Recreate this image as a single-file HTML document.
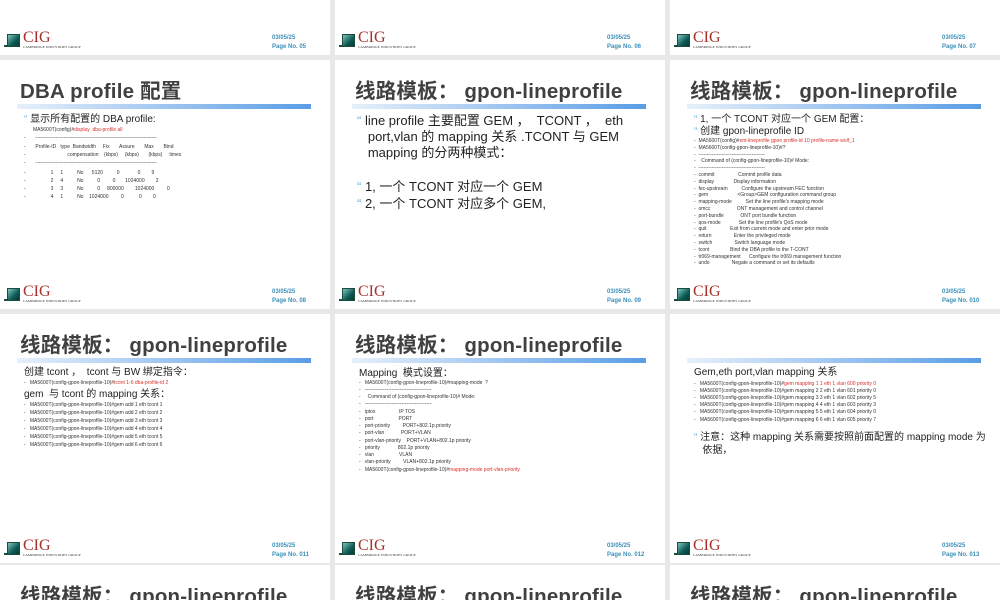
<!DOCTYPE html>
<html><head><meta charset="utf-8">
<style>
*{margin:0;padding:0;box-sizing:border-box}
html,body{width:1000px;height:600px;overflow:hidden}
body{background:#e8e8e8;position:relative;font-family:"Liberation Sans","Noto Sans CJK SC",sans-serif;color:#222}
.s{position:absolute;width:330px;height:249px;background:#fff;overflow:hidden}
.s *{position:absolute;white-space:nowrap}
.t{left:20px;top:19px;font-size:20.5px;line-height:26px;font-weight:bold;color:#404040;letter-spacing:0.2px}
.bar{left:17px;top:44px;width:294px;height:5px;background:linear-gradient(90deg,#e6f0fb,#5a9de6)}
.logo{left:7px;top:226px;width:90px;height:18px}
.sq{left:0;top:2px;width:13px;height:13px;background:linear-gradient(135deg,#7fc4c0,#0d5a55 60%,#063a36);border:1px solid #1b4d3a}
.sq2{left:-3px;top:13px;width:4px;height:2px;background:#1b4d3a}
.cig{left:16px;top:-4px;font-family:"Liberation Serif",serif;font-size:16px;line-height:19px;color:#a6312c}
.sub{left:16px;top:13px;font-family:"Liberation Serif",serif;font-size:3.5px;line-height:4px;color:#333;letter-spacing:0.1px}
.d{left:272px;top:229px;font-size:6px;line-height:7px;font-weight:bold;color:#3d8fb8}
.p{left:272px;top:238px;font-size:6px;line-height:7px;font-weight:bold;color:#3d8fb8}
.b{font-size:10px;line-height:12px;color:#222}
.c{font-size:5px;line-height:7px;color:#333}
.r{color:#d9302a;position:static!important}
.bl{color:#7ab6d8;position:static!important}
.last{height:35px}
</style></head><body>

<!-- row 0 -->
<div class="s" style="left:0;top:-194px">
<div class="logo"><div class="sq"></div><div class="sq2"></div><div class="cig">CIG</div><div class="sub">CAMBRIDGE INDUSTRIES GROUP</div></div>
<div class="d">03/05/25</div><div class="p">Page No. 05</div></div>
<div class="s" style="left:335px;top:-194px">
<div class="logo"><div class="sq"></div><div class="sq2"></div><div class="cig">CIG</div><div class="sub">CAMBRIDGE INDUSTRIES GROUP</div></div>
<div class="d">03/05/25</div><div class="p">Page No. 06</div></div>
<div class="s" style="left:670px;top:-194px">
<div class="logo"><div class="sq"></div><div class="sq2"></div><div class="cig">CIG</div><div class="sub">CAMBRIDGE INDUSTRIES GROUP</div></div>
<div class="d">03/05/25</div><div class="p">Page No. 07</div></div>

<!-- row 1 -->
<div class="s" style="left:0;top:60px">
<div class="t">DBA profile 配置</div><div class="bar"></div>
<div class="b" style="left:24px;top:54px"><span class="bl">“</span> 显示所有配置的 DBA profile:</div>
<div class="c" style="left:33px;top:67px">MA5600T(config)#<span class="r">display&nbsp; dba-profile all</span></div>
<div class="c" style="left:24px;top:75px">-&nbsp;&nbsp;&nbsp;&nbsp;&nbsp;&nbsp; -------------------------------------------------------------------------</div>
<div class="c" style="left:24px;top:84px">-&nbsp;&nbsp;&nbsp;&nbsp;&nbsp;&nbsp; Profile-ID&nbsp;&nbsp; type&nbsp; Bandwidth&nbsp;&nbsp;&nbsp;&nbsp; Fix&nbsp;&nbsp;&nbsp;&nbsp;&nbsp;&nbsp; Assure&nbsp;&nbsp;&nbsp;&nbsp;&nbsp;&nbsp; Max&nbsp;&nbsp;&nbsp;&nbsp;&nbsp;&nbsp; Bind</div>
<div class="c" style="left:24px;top:92px">-&nbsp;&nbsp;&nbsp;&nbsp;&nbsp;&nbsp;&nbsp;&nbsp;&nbsp;&nbsp;&nbsp;&nbsp;&nbsp;&nbsp;&nbsp;&nbsp;&nbsp;&nbsp;&nbsp;&nbsp;&nbsp;&nbsp;&nbsp;&nbsp;&nbsp;&nbsp;&nbsp;&nbsp;&nbsp; compensation&nbsp;&nbsp;&nbsp; (kbps)&nbsp;&nbsp;&nbsp;&nbsp; (kbps)&nbsp;&nbsp;&nbsp;&nbsp;&nbsp;&nbsp; (kbps)&nbsp;&nbsp;&nbsp;&nbsp; times</div>
<div class="c" style="left:24px;top:100px">-&nbsp;&nbsp;&nbsp;&nbsp;&nbsp;&nbsp; -------------------------------------------------------------------------</div>
<div class="c" style="left:24px;top:110px">-&nbsp;&nbsp;&nbsp;&nbsp;&nbsp;&nbsp;&nbsp;&nbsp;&nbsp;&nbsp;&nbsp;&nbsp;&nbsp;&nbsp;&nbsp;&nbsp;&nbsp; 1&nbsp;&nbsp;&nbsp;&nbsp; 1&nbsp;&nbsp;&nbsp;&nbsp;&nbsp;&nbsp;&nbsp;&nbsp;&nbsp; No&nbsp;&nbsp;&nbsp;&nbsp;&nbsp; 5120&nbsp;&nbsp;&nbsp;&nbsp;&nbsp;&nbsp;&nbsp;&nbsp;&nbsp; 0&nbsp;&nbsp;&nbsp;&nbsp;&nbsp;&nbsp;&nbsp;&nbsp;&nbsp;&nbsp;&nbsp;&nbsp; 0&nbsp;&nbsp;&nbsp;&nbsp;&nbsp;&nbsp;&nbsp; 9</div>
<div class="c" style="left:24px;top:118px">-&nbsp;&nbsp;&nbsp;&nbsp;&nbsp;&nbsp;&nbsp;&nbsp;&nbsp;&nbsp;&nbsp;&nbsp;&nbsp;&nbsp;&nbsp;&nbsp;&nbsp; 2&nbsp;&nbsp;&nbsp;&nbsp; 4&nbsp;&nbsp;&nbsp;&nbsp;&nbsp;&nbsp;&nbsp;&nbsp;&nbsp; No&nbsp;&nbsp;&nbsp;&nbsp;&nbsp;&nbsp;&nbsp;&nbsp;&nbsp; 0&nbsp;&nbsp;&nbsp;&nbsp;&nbsp;&nbsp;&nbsp;&nbsp; 0&nbsp;&nbsp;&nbsp;&nbsp;&nbsp;&nbsp; 1024000&nbsp;&nbsp;&nbsp;&nbsp;&nbsp;&nbsp;&nbsp; 2</div>
<div class="c" style="left:24px;top:126px">-&nbsp;&nbsp;&nbsp;&nbsp;&nbsp;&nbsp;&nbsp;&nbsp;&nbsp;&nbsp;&nbsp;&nbsp;&nbsp;&nbsp;&nbsp;&nbsp;&nbsp; 3&nbsp;&nbsp;&nbsp;&nbsp; 3&nbsp;&nbsp;&nbsp;&nbsp;&nbsp;&nbsp;&nbsp;&nbsp;&nbsp; No&nbsp;&nbsp;&nbsp;&nbsp;&nbsp;&nbsp;&nbsp;&nbsp;&nbsp; 0&nbsp;&nbsp;&nbsp;&nbsp; 800000&nbsp;&nbsp;&nbsp;&nbsp;&nbsp;&nbsp;&nbsp; 1024000&nbsp;&nbsp;&nbsp;&nbsp;&nbsp;&nbsp;&nbsp;&nbsp; 0</div>
<div class="c" style="left:24px;top:134px">-&nbsp;&nbsp;&nbsp;&nbsp;&nbsp;&nbsp;&nbsp;&nbsp;&nbsp;&nbsp;&nbsp;&nbsp;&nbsp;&nbsp;&nbsp;&nbsp;&nbsp; 4&nbsp;&nbsp;&nbsp;&nbsp; 1&nbsp;&nbsp;&nbsp;&nbsp;&nbsp;&nbsp;&nbsp;&nbsp;&nbsp; No&nbsp;&nbsp;&nbsp; 1024000&nbsp;&nbsp;&nbsp;&nbsp;&nbsp;&nbsp;&nbsp;&nbsp; 0&nbsp;&nbsp;&nbsp;&nbsp;&nbsp;&nbsp;&nbsp;&nbsp;&nbsp;&nbsp; 0&nbsp;&nbsp;&nbsp;&nbsp;&nbsp;&nbsp;&nbsp; 0</div>
<div class="logo"><div class="sq"></div><div class="sq2"></div><div class="cig">CIG</div><div class="sub">CAMBRIDGE INDUSTRIES GROUP</div></div>
<div class="d">03/05/25</div><div class="p">Page No. 08</div></div>

<div class="s" style="left:335px;top:60px">
<div class="t">线路模板： gpon-lineprofile</div><div class="bar"></div>
<div style="left:22px;top:53px;font-size:13px;line-height:16px;color:#222"><span class="bl">“</span> line profile 主要配置 GEM ，&nbsp; TCONT ，&nbsp; eth<br>&nbsp;&nbsp; port,vlan 的 mapping 关系 .TCONT 与 GEM<br>&nbsp;&nbsp; mapping 的分两种模式：</div>
<div style="left:22px;top:118px;font-size:13px;line-height:17px;color:#222"><span class="bl">“</span> 1, 一个 TCONT 对应一个 GEM<br><span class="bl">“</span> 2, 一个 TCONT 对应多个 GEM,</div>
<div class="logo"><div class="sq"></div><div class="sq2"></div><div class="cig">CIG</div><div class="sub">CAMBRIDGE INDUSTRIES GROUP</div></div>
<div class="d">03/05/25</div><div class="p">Page No. 09</div></div>

<div class="s" style="left:670px;top:60px">
<div class="t">线路模板： gpon-lineprofile</div><div class="bar"></div>
<div class="b" style="left:24px;top:54px"><span class="bl">“</span> 1, 一个 TCONT 对应一个 GEM 配置：</div>
<div class="b" style="left:24px;top:66px"><span class="bl">“</span> 创建 gpon-lineprofile ID</div>
<div class="c" style="left:24px;top:78px;line-height:6.8px">-&nbsp; MA5600T(config)#<span class="r">ont-lineprofile gpon profile-id 10 profile-name wolf_1</span><br>-&nbsp; MA5600T(config-gpon-lineprofile-10)#?<br>-&nbsp; ----------------------------------------<br>-&nbsp;&nbsp;&nbsp; Command of (config-gpon-lineprofile-10)# Mode:<br>-&nbsp; ----------------------------------------<br>-&nbsp; commit&nbsp;&nbsp;&nbsp;&nbsp;&nbsp;&nbsp;&nbsp;&nbsp;&nbsp;&nbsp;&nbsp;&nbsp;&nbsp;&nbsp;&nbsp;&nbsp; Commit profile data<br>-&nbsp; display&nbsp;&nbsp;&nbsp;&nbsp;&nbsp;&nbsp;&nbsp;&nbsp;&nbsp;&nbsp;&nbsp;&nbsp;&nbsp; Display information<br>-&nbsp; fec-upstream&nbsp;&nbsp;&nbsp;&nbsp;&nbsp;&nbsp;&nbsp;&nbsp;&nbsp; Configure the upstream FEC function<br>-&nbsp; gem&nbsp;&nbsp;&nbsp;&nbsp;&nbsp;&nbsp;&nbsp;&nbsp;&nbsp;&nbsp;&nbsp;&nbsp;&nbsp;&nbsp;&nbsp;&nbsp;&nbsp;&nbsp;&nbsp;&nbsp; &lt;Group&gt;GEM configuration command group<br>-&nbsp; mapping-mode&nbsp;&nbsp;&nbsp;&nbsp;&nbsp;&nbsp;&nbsp;&nbsp;&nbsp; Set the line profile's mapping mode<br>-&nbsp; omcc&nbsp;&nbsp;&nbsp;&nbsp;&nbsp;&nbsp;&nbsp;&nbsp;&nbsp;&nbsp;&nbsp;&nbsp;&nbsp;&nbsp;&nbsp;&nbsp;&nbsp;&nbsp; ONT management and control channel<br>-&nbsp; port-bundle&nbsp;&nbsp;&nbsp;&nbsp;&nbsp;&nbsp;&nbsp;&nbsp;&nbsp;&nbsp;&nbsp; ONT port bundle function<br>-&nbsp; qos-mode&nbsp;&nbsp;&nbsp;&nbsp;&nbsp;&nbsp;&nbsp;&nbsp;&nbsp;&nbsp;&nbsp;&nbsp; Set the line profile's QoS mode<br>-&nbsp; quit&nbsp;&nbsp;&nbsp;&nbsp;&nbsp;&nbsp;&nbsp;&nbsp;&nbsp;&nbsp;&nbsp;&nbsp;&nbsp;&nbsp;&nbsp;&nbsp; Exit from current mode and enter prior mode<br>-&nbsp; return&nbsp;&nbsp;&nbsp;&nbsp;&nbsp;&nbsp;&nbsp;&nbsp;&nbsp;&nbsp;&nbsp;&nbsp;&nbsp;&nbsp;&nbsp; Enter the privileged mode<br>-&nbsp; switch&nbsp;&nbsp;&nbsp;&nbsp;&nbsp;&nbsp;&nbsp;&nbsp;&nbsp;&nbsp;&nbsp;&nbsp;&nbsp;&nbsp;&nbsp; Switch language mode<br>-&nbsp; tcont&nbsp;&nbsp;&nbsp;&nbsp;&nbsp;&nbsp;&nbsp;&nbsp;&nbsp;&nbsp;&nbsp;&nbsp;&nbsp;&nbsp; Bind the DBA profile to the T-CONT<br>-&nbsp; tr069-management&nbsp;&nbsp;&nbsp;&nbsp;&nbsp; Configure the tr069 management function<br>-&nbsp; undo&nbsp;&nbsp;&nbsp;&nbsp;&nbsp;&nbsp;&nbsp;&nbsp;&nbsp;&nbsp;&nbsp;&nbsp;&nbsp;&nbsp;&nbsp; Negate a command or set its defaults</div>
<div class="logo"><div class="sq"></div><div class="sq2"></div><div class="cig">CIG</div><div class="sub">CAMBRIDGE INDUSTRIES GROUP</div></div>
<div class="d">03/05/25</div><div class="p">Page No. 010</div></div>

<!-- row 2 -->
<div class="s" style="left:0;top:314px">
<div class="t">线路模板： gpon-lineprofile</div><div class="bar"></div>
<div class="b" style="left:24px;top:53px">创建 tcont ，&nbsp; tcont 与 BW 绑定指令：</div>
<div class="c" style="left:24px;top:65.5px">-&nbsp;&nbsp; MA5600T(config-gpon-lineprofile-10)#<span class="r">tcont 1-6 dba-profile-id 2</span></div>
<div class="b" style="left:24px;top:75px">gem&nbsp; 与 tcont 的 mapping 关系：</div>
<div class="c" style="left:24px;top:86.5px;line-height:8px">-&nbsp;&nbsp; MA5600T(config-gpon-lineprofile-10)#gem add 1 eth tcont 1<br>-&nbsp;&nbsp; MA5600T(config-gpon-lineprofile-10)#gem add 2 eth tcont 2<br>-&nbsp;&nbsp; MA5600T(config-gpon-lineprofile-10)#gem add 3 eth tcont 3<br>-&nbsp;&nbsp; MA5600T(config-gpon-lineprofile-10)#gem add 4 eth tcont 4<br>-&nbsp;&nbsp; MA5600T(config-gpon-lineprofile-10)#gem add 5 eth tcont 5<br>-&nbsp;&nbsp; MA5600T(config-gpon-lineprofile-10)#gem add 6 eth tcont 6</div>
<div class="logo"><div class="sq"></div><div class="sq2"></div><div class="cig">CIG</div><div class="sub">CAMBRIDGE INDUSTRIES GROUP</div></div>
<div class="d">03/05/25</div><div class="p">Page No. 011</div></div>

<div class="s" style="left:335px;top:314px">
<div class="t">线路模板： gpon-lineprofile</div><div class="bar"></div>
<div class="b" style="left:24px;top:54px">Mapping&nbsp; 模式设置：</div>
<div class="c" style="left:24px;top:65.5px;line-height:7.25px">-&nbsp;&nbsp; MA5600T(config-gpon-lineprofile-10)#mapping-mode&nbsp; ?<br>-&nbsp;&nbsp; ----------------------------------------<br>-&nbsp;&nbsp;&nbsp;&nbsp; Command of (config-gpon-lineprofile-10)# Mode:<br>-&nbsp;&nbsp; ----------------------------------------<br>-&nbsp;&nbsp; iptos&nbsp;&nbsp;&nbsp;&nbsp;&nbsp;&nbsp;&nbsp;&nbsp;&nbsp;&nbsp;&nbsp;&nbsp;&nbsp;&nbsp;&nbsp;&nbsp; IP TOS<br>-&nbsp;&nbsp; port&nbsp;&nbsp;&nbsp;&nbsp;&nbsp;&nbsp;&nbsp;&nbsp;&nbsp;&nbsp;&nbsp;&nbsp;&nbsp;&nbsp;&nbsp;&nbsp;&nbsp; PORT<br>-&nbsp;&nbsp; port-priority&nbsp;&nbsp;&nbsp;&nbsp;&nbsp;&nbsp;&nbsp;&nbsp; PORT+802.1p priority<br>-&nbsp;&nbsp; port-vlan&nbsp;&nbsp;&nbsp;&nbsp;&nbsp;&nbsp;&nbsp;&nbsp;&nbsp;&nbsp;&nbsp; PORT+VLAN<br>-&nbsp;&nbsp; port-vlan-priority&nbsp;&nbsp;&nbsp; PORT+VLAN+802.1p priority<br>-&nbsp;&nbsp; priority&nbsp;&nbsp;&nbsp;&nbsp;&nbsp;&nbsp;&nbsp;&nbsp;&nbsp;&nbsp;&nbsp;&nbsp; 802.1p priority<br>-&nbsp;&nbsp; vlan&nbsp;&nbsp;&nbsp;&nbsp;&nbsp;&nbsp;&nbsp;&nbsp;&nbsp;&nbsp;&nbsp;&nbsp;&nbsp;&nbsp;&nbsp;&nbsp;&nbsp; VLAN<br>-&nbsp;&nbsp; vlan-priority&nbsp;&nbsp;&nbsp;&nbsp;&nbsp;&nbsp;&nbsp;&nbsp; VLAN+802.1p priority<br>-&nbsp;&nbsp; MA5600T(config-gpon-lineprofile-10)#<span class="r">mapping-mode port-vlan-priority</span></div>
<div class="logo"><div class="sq"></div><div class="sq2"></div><div class="cig">CIG</div><div class="sub">CAMBRIDGE INDUSTRIES GROUP</div></div>
<div class="d">03/05/25</div><div class="p">Page No. 012</div></div>

<div class="s" style="left:670px;top:314px">
<div class="bar"></div>
<div class="b" style="left:24px;top:53px">Gem,eth port,vlan mapping 关系</div>
<div class="c" style="left:24px;top:66.5px;line-height:7.2px">-&nbsp;&nbsp; MA5600T(config-gpon-lineprofile-10)#<span class="r">gem mapping 1 1 eth 1 vlan 600 priority 0</span><br>-&nbsp;&nbsp; MA5600T(config-gpon-lineprofile-10)#gem mapping 2 2 eth 1 vlan 601 priority 0<br>-&nbsp;&nbsp; MA5600T(config-gpon-lineprofile-10)#gem mapping 3 3 eth 1 vlan 602 priority 5<br>-&nbsp;&nbsp; MA5600T(config-gpon-lineprofile-10)#gem mapping 4 4 eth 1 vlan 603 priority 3<br>-&nbsp;&nbsp; MA5600T(config-gpon-lineprofile-10)#gem mapping 5 5 eth 1 vlan 604 priority 0<br>-&nbsp;&nbsp; MA5600T(config-gpon-lineprofile-10)#gem mapping 6 6 eth 1 vlan 605 priority 7</div>
<div class="b" style="left:24px;top:116.5px;line-height:13px"><span class="bl">“</span> 注意：这种 mapping 关系需要按照前面配置的 mapping mode 为<br>&nbsp;&nbsp; 依据，</div>
<div class="logo"><div class="sq"></div><div class="sq2"></div><div class="cig">CIG</div><div class="sub">CAMBRIDGE INDUSTRIES GROUP</div></div>
<div class="d">03/05/25</div><div class="p">Page No. 013</div></div>

<!-- row 3 -->
<div class="s last" style="left:0;top:565px"><div class="t">线路模板： gpon-lineprofile</div></div>
<div class="s last" style="left:335px;top:565px"><div class="t">线路模板： gpon-lineprofile</div></div>
<div class="s last" style="left:670px;top:565px"><div class="t">线路模板： gpon-lineprofile</div></div>
</body></html>
